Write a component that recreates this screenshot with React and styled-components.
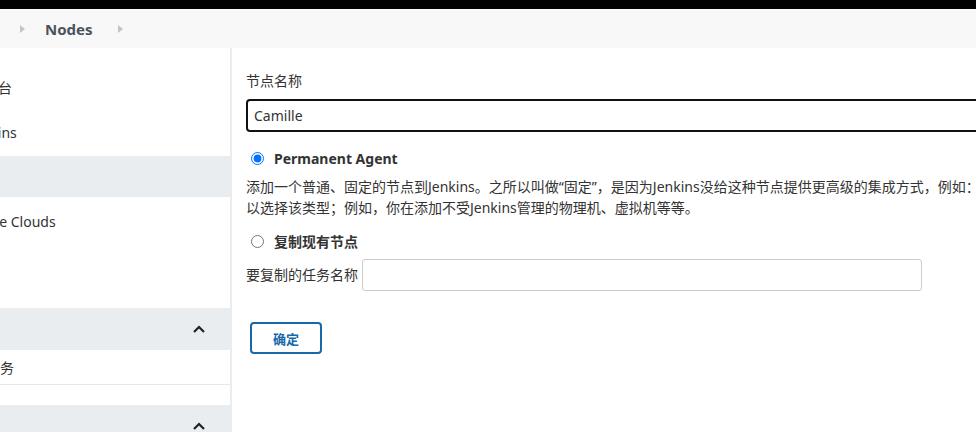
import React, { useEffect, useRef } from 'react';
import styled, { createGlobalStyle } from 'styled-components';

const GlobalStyle = createGlobalStyle`
    html, body {
        margin: 0;
        padding: 0;
        overflow: hidden;
        background: #fff;
    }
    body {
        font-family: "Noto Sans", "Noto Sans CJK SC", sans-serif;
        color: #333;
        font-size: 14px;
    }
    * {
        box-sizing: border-box;
    }
`;

// the page is scrolled sideways a little, like in the screenshot
const Page = styled.div`
    width: 1400px;
    margin-left: -120px;
    height: 432px;
    display: flex;
    flex-direction: column;
`;

const TopBar = styled.div`
    height: 9px;
    background: #000;
    flex-shrink: 0;
`;

const Breadcrumbs = styled.nav`
    height: 39px;
    background: #f8f8f8;
    display: flex;
    align-items: center;
    padding-left: 56px;
    flex-shrink: 0;
`;

const Crumb = styled.span`
    font-size: 15px;
    line-height: 20px;
    font-weight: ${({ $current }) => ($current ? 700 : 400)};
    color: ${({ $current }) => ($current ? '#4b525b' : '#333')};
    white-space: nowrap;
`;

const Separator = styled.span`
    display: flex;
    margin: ${({ $wide }) => ($wide ? '0 0 0 25px' : '0 20px 0 24px')};
    svg {
        display: block;
    }
`;

const Body = styled.div`
    flex: 1;
    display: flex;
    min-height: 0;
`;

const Sidebar = styled.aside`
    width: 352px;
    flex-shrink: 0;
    border-right: 2px solid #e9edf0;
    padding-top: 18px;
    overflow: hidden;
`;

const TaskList = styled.div`
    display: flex;
    flex-direction: column;
    gap: 4px;
    margin-bottom: 66px;
`;

const TaskItem = styled.div`
    height: 41px;
    display: flex;
    align-items: center;
    padding-left: 62px;
    font-size: 14px;
    white-space: nowrap;
    color: #333;
    background: ${({ $active }) => ($active ? '#e9edf0' : 'transparent')};
`;

const Pane = styled.section`
    margin-bottom: 20px;
`;

const PaneHeader = styled.div`
    height: 42px;
    background: #e9edf0;
    display: flex;
    align-items: center;
    justify-content: space-between;
    padding: 0 24px 0 20px;
    font-weight: 700;
    white-space: nowrap;
`;

const PaneRow = styled.div`
    height: 35px;
    display: flex;
    align-items: center;
    padding-left: 8px;
    border-bottom: 1px solid #e4e8eb;
    white-space: nowrap;
`;

const Main = styled.main`
    flex: 1;
    min-width: 0;
    padding: 23px 0 0 14px;
    overflow: hidden;
`;

const Label = styled.div`
    line-height: 20px;
    font-size: 14px;
    color: #333;
    white-space: nowrap;
`;

const NameInput = styled.input`
    display: block;
    width: 100%;
    height: 33px;
    margin-top: 8px;
    border: 2px solid #111;
    border-radius: 4px;
    padding: 0 6px;
    font: inherit;
    font-size: 14px;
    color: #333;
    outline: none;
    caret-color: #111;
`;

const RadioRow = styled.label`
    display: flex;
    align-items: center;
    height: 20px;
    margin-top: ${({ $top }) => $top}px;
    font-weight: 700;
    color: #333;

    input {
        margin: 0 10px 0 5px;
        width: 13px;
        height: 13px;
    }
`;

const Description = styled.div`
    margin-top: 8px;
    line-height: 21px;
    font-size: 14px;
    color: #333;

    p {
        margin: 0;
        white-space: nowrap;
    }
`;

const CopyRow = styled.div`
    display: flex;
    align-items: center;
    gap: 4px;
    margin-top: 8px;
`;

const CopyInput = styled.input`
    width: 560px;
    height: 32px;
    border: 1px solid #ccc;
    border-radius: 3px;
    padding: 0 6px;
    font: inherit;
    outline: none;
`;

const SubmitButton = styled.button`
    display: block;
    margin: 31px 0 0 4px;
    width: 72px;
    height: 32px;
    background: #fff;
    border: 2px solid #1769aa;
    border-radius: 4px;
    color: #1769aa;
    font: inherit;
    font-size: 13px;
    font-weight: 700;
    cursor: pointer;
`;

const Arrow = () => (
    <svg width="5" height="8" viewBox="0 0 5 8">
        <path d="M0 0 L5 4 L0 8 Z" fill="#c4c4c4" />
    </svg>
);

const ChevronUp = () => (
    <svg width="14" height="10" viewBox="0 0 14 10">
        <polyline points="2,8 7,3 12,8" fill="none" stroke="#222" strokeWidth="2.2" />
    </svg>
);

export default function App() {
    const nameRef = useRef(null);

    useEffect(() => {
        const el = nameRef.current;
        if (el) {
            el.focus({ preventScroll: true });
            el.setSelectionRange(el.value.length, el.value.length);
            window.scrollTo(0, 0);
        }
    }, []);

    return (
        <>
            <GlobalStyle />
            <Page>
                <TopBar />
                <Breadcrumbs>
                    <Crumb>系统管理</Crumb>
                    <Separator>
                        <Arrow />
                    </Separator>
                    <Crumb $current>Nodes</Crumb>
                    <Separator $wide>
                        <Arrow />
                    </Separator>
                </Breadcrumbs>
                <Body>
                    <Sidebar>
                        <TaskList>
                            <TaskItem>返回工作台</TaskItem>
                            <TaskItem>管理Jenkins</TaskItem>
                            <TaskItem $active>新建节点</TaskItem>
                            <TaskItem>Configure Clouds</TaskItem>
                        </TaskList>
                        <Pane>
                            <PaneHeader>
                                <span>构建队列</span>
                                <ChevronUp />
                            </PaneHeader>
                            <PaneRow>队列中没有构建任务</PaneRow>
                        </Pane>
                        <Pane>
                            <PaneHeader>
                                <span>构建执行状态</span>
                                <ChevronUp />
                            </PaneHeader>
                        </Pane>
                    </Sidebar>
                    <Main>
                        <Label>节点名称</Label>
                        <NameInput ref={nameRef} defaultValue="Camille" />
                        <RadioRow $top={16}>
                            <input type="radio" name="mode" defaultChecked />
                            Permanent Agent
                        </RadioRow>
                        <Description>
                            <p>
                                添加一个普通、固定的节点到Jenkins。之所以叫做“固定”，是因为Jenkins没给这种节点提供更高级的集成方式，例如：动态供给。如果没有其他类型的节点可用，可
                            </p>
                            <p>以选择该类型；例如，你在添加不受Jenkins管理的物理机、虚拟机等等。</p>
                        </Description>
                        <RadioRow $top={13}>
                            <input type="radio" name="mode" />
                            复制现有节点
                        </RadioRow>
                        <CopyRow>
                            <Label>要复制的任务名称</Label>
                            <CopyInput />
                        </CopyRow>
                        <SubmitButton type="button">确定</SubmitButton>
                    </Main>
                </Body>
            </Page>
        </>
    );
}
